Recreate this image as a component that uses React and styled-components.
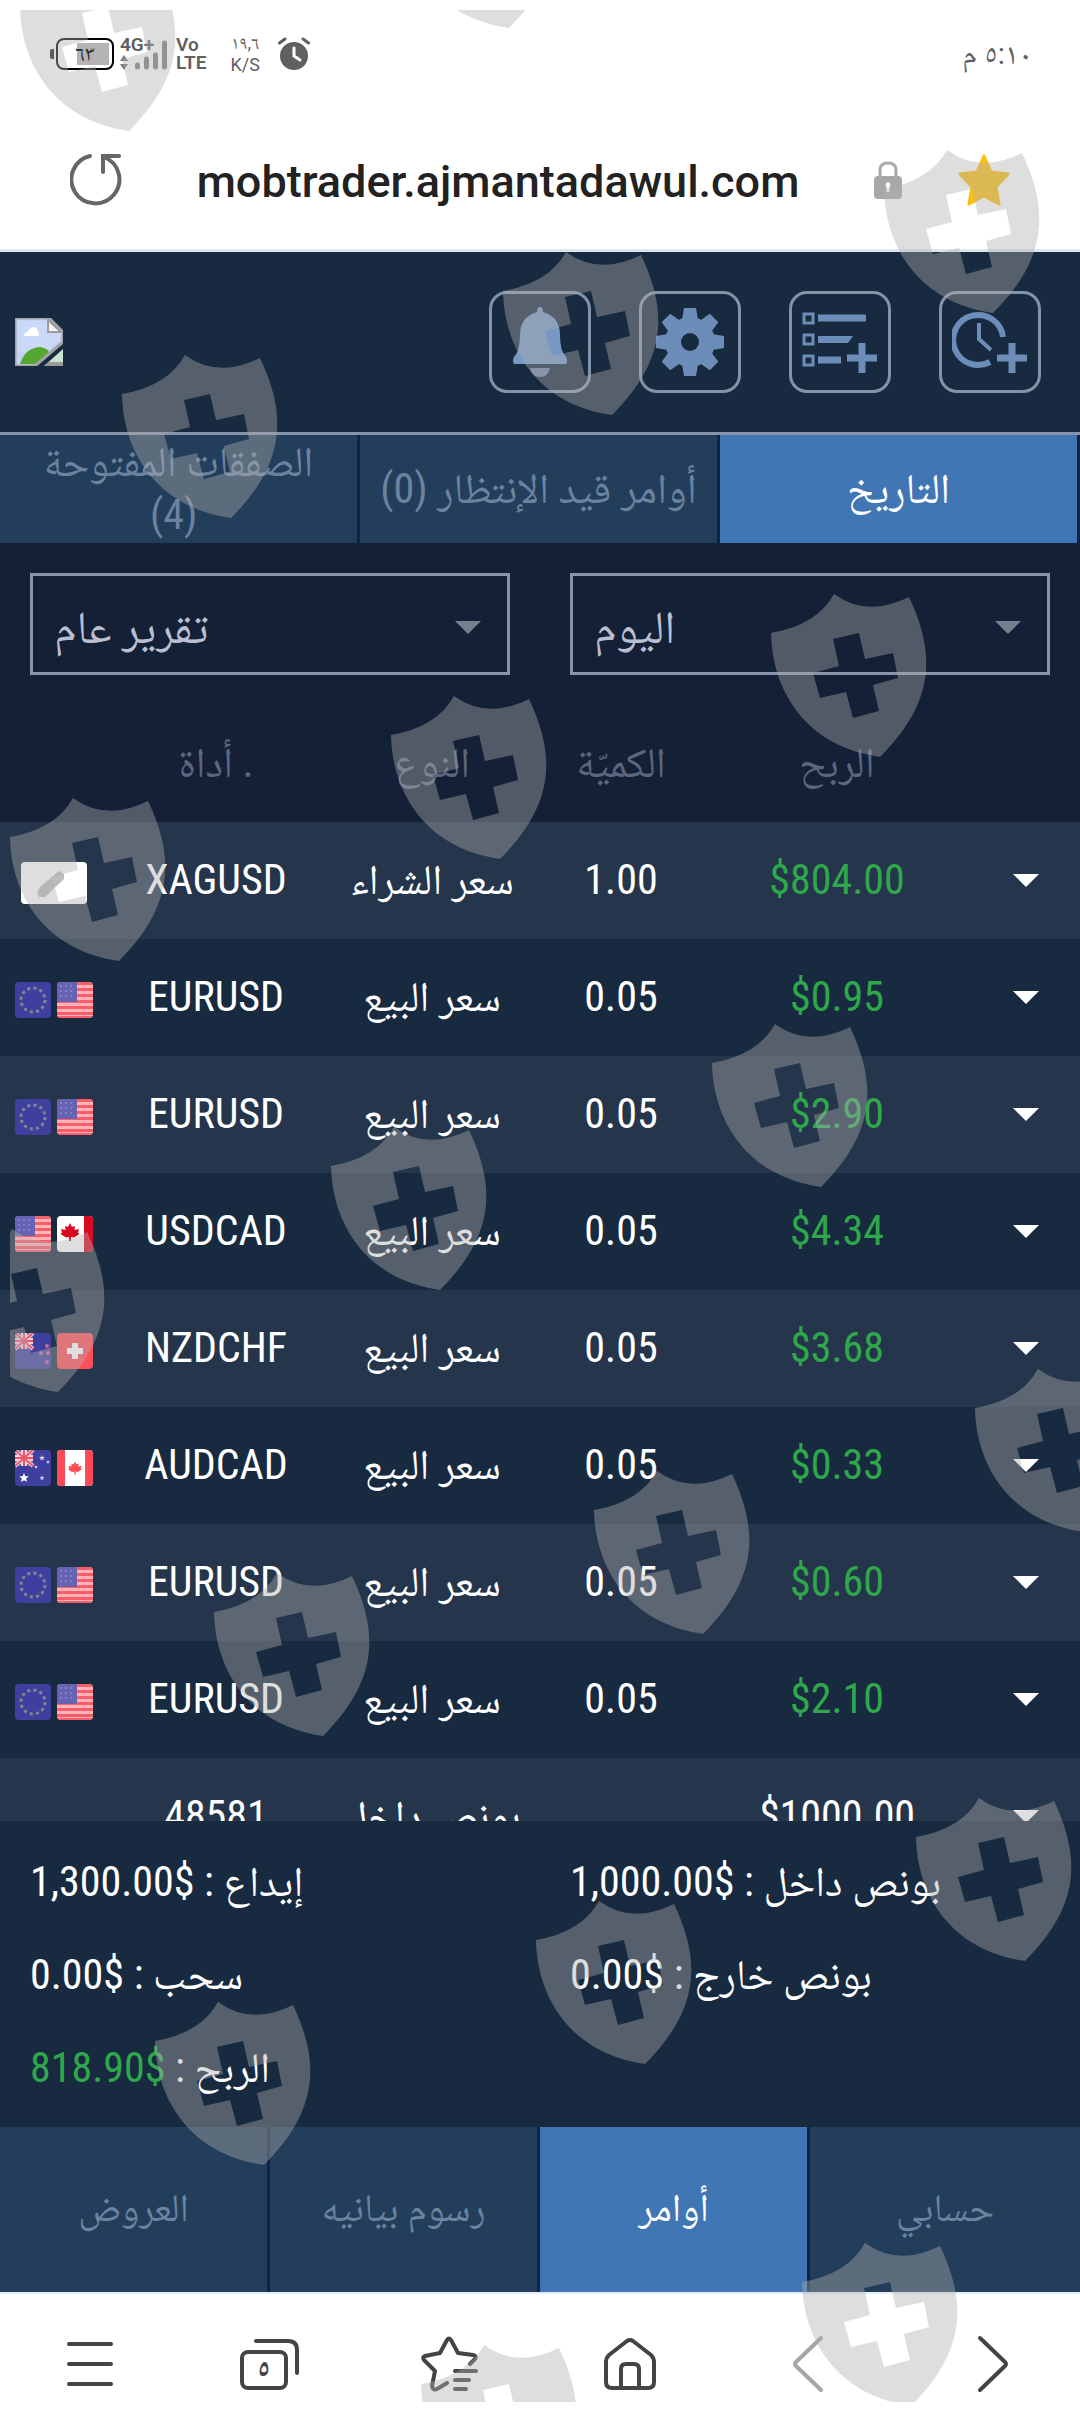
import React from "react";
import styled, { createGlobalStyle } from "styled-components";

const color = {
  navy: "#182a40",
  deep: "#142036",
  stripe: "#25364c",
  tab: "#233e5b",
  active: "#4176b5",
  line: "#8793a9",
  muted: "#6c83a0",
  head: "#5d667c",
  green: "#2fa84b",
  glyph: "#6b8db8",
};

const condensed = `"Roboto Condensed", "Liberation Sans Narrow", Roboto, "Noto Naskh Arabic", "Noto Sans Arabic", "DejaVu Sans", sans-serif`;
const regular = `Roboto, "Noto Naskh Arabic", "Noto Sans Arabic", "DejaVu Sans", sans-serif`;

const GlobalStyle = createGlobalStyle`
  *, *::before, *::after { box-sizing: border-box; }
  body { margin: 0; background: #fff; }
  button, select { font: inherit; color: inherit; border: 0; padding: 0; margin: 0; background: none; border-radius: 0; }
`;

const Page = styled.div`
  position: relative;
  display: flex;
  flex-direction: column;
  height: 100vh;
  overflow: hidden;
  background: #fff;
  font-family: ${condensed};
  font-size: 42px;
  line-height: 53px;
  color: #fff;
`;

/* ---------- phone status bar ---------- */
const StatusBar = styled.div`
  display: flex;
  align-items: center;
  height: 108px;
  padding: 0 48px 0 50px;
  font-family: ${regular};
  color: #606060;
`;
const Battery = styled.div`
  display: flex;
  align-items: center;
  gap: 2px;
  &::before { content: ""; width: 4px; height: 10px; background: #222; border-radius: 2px 0 0 2px; }
`;
const BatteryBody = styled.span`
  display: grid;
  place-items: center;
  width: 58px;
  height: 32px;
  border: 2px solid #000;
  border-radius: 8px;
  background: linear-gradient(#b4b4b4, #b4b4b4) right 3px center / 32px 22px no-repeat;
  font-size: 22px;
  line-height: 24px;
  color: #333;
`;
const Network = styled.div`
  display: grid;
  margin-left: 6px;
  width: 50px;
  height: 36px;
  & > * { grid-area: 1 / 1; }
`;
const Small = styled.span`
  font-size: 19px;
  line-height: 18px;
  font-weight: 600;
`;
const Stack = styled.div`
  display: flex;
  flex-direction: column;
  align-items: ${(p) => p.$align || "flex-start"};
  margin-left: ${(p) => p.$gap}px;
`;
const Speed = styled.span`
  font-size: 18px;
  line-height: 22px;
`;
const AlarmIcon = styled.svg`
  margin-left: 18px;
`;
const Clock = styled.time`
  margin-left: auto;
  font-size: 30px;
  line-height: 36px;
`;

/* ---------- browser address bar ---------- */
const AddressBar = styled.div`
  display: flex;
  align-items: center;
  height: 144px;
  padding: 2px 70px 0;
  border-bottom: 3px solid #dfe5ec;
`;
const IconButton = styled.button`
  display: grid;
  place-items: center;
  cursor: pointer;
`;
const Address = styled.div`
  flex: 1;
  padding-top: 4px;
  text-align: center;
  font-family: ${regular};
  font-size: 45px;
  line-height: 56px;
  font-weight: 500;
  color: #222;
`;
const AddressTools = styled.div`
  display: flex;
  align-items: center;
  gap: 56px;
`;

/* ---------- trader header ---------- */
const Header = styled.header`
  display: flex;
  align-items: center;
  justify-content: space-between;
  height: 183px;
  padding: 0 39px 0 15px;
  background: ${color.navy};
  border-bottom: 3px solid ${color.line};
`;
const Tools = styled.div`
  display: flex;
  gap: 48px;
`;
const ToolButton = styled.button`
  display: grid;
  place-items: center;
  width: 102px;
  height: 102px;
  border: 3px solid #8393a8;
  border-radius: 18px;
  cursor: pointer;
`;

/* ---------- tabs ---------- */
const TabRow = styled.nav`
  display: grid;
  grid-template-columns: repeat(${(p) => p.$count}, 1fr);
  height: ${(p) => p.$height}px;
  flex: none;
  background: ${color.tab};
  font-size: ${(p) => p.$size}px;
`;
const Tab = styled.button`
  padding: 0 12px 2px;
  border-right: 3px solid #132347;
  background: ${(p) => (p.$active ? color.active : color.tab)};
  color: ${(p) => (p.$active ? "#fff" : color.muted)};
  overflow: hidden;
  cursor: pointer;
  ${(p) => p.$last && "border-right: 0;"}
`;
const TabText = styled.span`
  display: block;
`;

/* ---------- filters ---------- */
const Filters = styled.div`
  display: grid;
  grid-template-columns: 1fr 1fr;
  gap: 60px;
  padding: 30px;
  background: ${color.deep};
`;
const SelectBox = styled.label`
  display: grid;
  align-items: center;
  height: 102px;
  border: 3px solid ${color.line};
  color: #b9bfd0;
  & > * { grid-area: 1 / 1; }
  & > svg { justify-self: end; margin: 6px 24px 0 0; pointer-events: none; }
`;
const Select = styled.select`
  appearance: none;
  width: 100%;
  height: 100%;
  padding: 6px 21px 0;
  font-size: 46px;
  line-height: 60px;
`;

/* ---------- orders table ---------- */
const TableArea = styled.main`
  flex: 1;
  min-height: 0;
  overflow: auto;
  scrollbar-width: none;
  background: ${color.navy};
`;
const Table = styled.table`
  width: 100%;
  table-layout: fixed;
  border-collapse: collapse;
`;
const Col = styled.col`
  width: ${(p) => p.$w}%;
`;
const HeadRow = styled.tr`
  height: 117px;
  background: ${color.deep};
  color: ${color.head};
`;
const Row = styled.tr`
  height: 117px;
  &:nth-child(odd) { background: ${color.stripe}; }
`;
const Th = styled.th`
  padding: 0 0 2px;
  font-weight: 400;
  white-space: nowrap;
`;
const Td = styled.td`
  padding: 0 0 2px;
  text-align: center;
  white-space: nowrap;
  color: ${(p) => (p.$gain ? color.green : "#fff")};
`;
const Flags = styled.span`
  display: flex;
  justify-content: center;
  gap: 6px;
  padding-top: 6px;
`;
const RowToggle = styled(IconButton)`
  width: 100%;
  padding-top: 2px;
`;

/* ---------- summary ---------- */
const Summary = styled.section`
  display: grid;
  grid-template-columns: 1fr 1fr;
  grid-auto-rows: 93px;
  align-items: center;
  column-gap: 60px;
  padding: 14px 30px 13px;
  background: ${color.navy};
`;
const Total = styled.div`
  grid-column: ${(p) => p.$col};
  text-align: left;
  white-space: nowrap;
`;
const Value = styled.bdi`
  color: ${(p) => (p.$gain ? color.green : "#fff")};
`;

/* ---------- browser toolbar ---------- */
const Toolbar = styled.nav`
  display: grid;
  grid-template-columns: repeat(6, 1fr);
  flex: none;
  height: 144px;
  padding-bottom: 2px;
  border-top: 2px solid #e3edf8;
  color: #444;
`;
const TabCount = styled.span`
  grid-area: 1 / 1;
  padding: 8px 12px 0 0;
  font-family: ${regular};
  font-size: 28px;
  line-height: 28px;
  font-weight: 700;
`;
const Stacked = styled(IconButton)`
  & > svg { grid-area: 1 / 1; }
`;

const Overlay = styled.div`
  position: absolute;
  inset: 10px 0 34px 10px;
  overflow: hidden;
  pointer-events: none;
  & > svg { display: block; }
`;

/* ---------- icons ---------- */
const Caret = ({ fill = "#fff", w = 26, h = 13 }) => (
  <svg width={w} height={h} viewBox="0 0 26 13" aria-hidden="true"><path d="M0 0H26L13 13Z" fill={fill} /></svg>
);

const Star5 = ({ cx, cy, r, fill }) => {
  const pts = [];
  for (let i = 0; i < 10; i++) {
    const a = (Math.PI / 5) * i - Math.PI / 2;
    const q = i % 2 ? r * 0.45 : r;
    pts.push(`${(cx + q * Math.cos(a)).toFixed(2)},${(cy + q * Math.sin(a)).toFixed(2)}`);
  }
  return <polygon points={pts.join(" ")} fill={fill} />;
};

const Leaf = ({ x, fill }) => (
  <path transform={`translate(${x} 9)`} fill={fill}
    d="M0 0L2 4L5 3L4.500 7L9 6L8 9.500L9.500 11L4 14.500L1 14V18H-1V14L-4 14.500L-9.500 11L-8 9.500L-9 6L-4.500 7L-5 3L-2 4Z" />
);

const UnionJack = () => (
  <g>
    <rect width="18" height="16" fill="#5a58b0" />
    <path d="M0 0L18 16M18 0L0 16" stroke="#f3d5dc" strokeWidth="4" />
    <path d="M9 0V16M0 8H18" stroke="#f3d5dc" strokeWidth="6" />
    <path d="M9 0V16M0 8H18M0 0L18 16M18 0L0 16" stroke="#f0566a" strokeWidth="2" />
  </g>
);

const flagArt = {
  EU: (
    <>
      <rect width="36" height="36" fill="#3f3f9f" />
      <circle cx="18" cy="18" r="12" fill="none" stroke="#85838c" strokeWidth="3" strokeDasharray="3.200 3.080" />
    </>
  ),
  US: (
    <>
      <rect width="36" height="36" fill="#ffb3b8" />
      {[1, 7, 13, 19, 25, 31].map((y) => <rect key={y} y={y - 1} width="36" height="3" fill="#fb5d6b" />)}
      <rect y="34" width="36" height="2" fill="#fb5d6b" />
      <rect width="20" height="20" fill="#6663b4" />
      {[4, 9, 14].map((y) => <path key={y} d={`M3 ${y}H18`} stroke="#8480c6" strokeWidth="2" strokeDasharray="2 3" />)}
    </>
  ),
  CA: (
    <>
      <rect width="36" height="36" fill="#fff" />
      <rect width="8" height="36" fill="#ff4b57" />
      <rect x="28" width="8" height="36" fill="#ff4b57" />
      <g transform="translate(5 5) scale(0.72)"><Leaf x={18} fill="#ff4b57" /></g>
    </>
  ),
  CA_WIDE: (
    <>
      <rect width="36" height="36" fill="#fff" />
      <rect x="27" width="9" height="36" fill="#d80a20" />
      <g transform="translate(0 -2)"><Leaf x={13} fill="#d80a20" /></g>
    </>
  ),
  NZ: (
    <>
      <rect width="36" height="36" fill="#3f3f9f" />
      <UnionJack />
      <circle cx="32" cy="13" r="2" fill="#c66a96" />
      <circle cx="26" cy="20" r="2" fill="#c66a96" />
      <circle cx="33" cy="20" r="2" fill="#c66a96" />
      <circle cx="32" cy="29" r="2" fill="#c66a96" />
    </>
  ),
  AU: (
    <>
      <rect width="36" height="36" fill="#3f3f9f" />
      <UnionJack />
      <Star5 cx={9} cy={28} r={5} fill="#fff" />
      <Star5 cx={27} cy={8} r={3} fill="#d5d4ee" />
      <Star5 cx={33} cy={12} r={2} fill="#d5d4ee" />
      <Star5 cx={21} cy={17} r={2} fill="#d5d4ee" />
      <Star5 cx={27} cy={28} r={2.5} fill="#d5d4ee" />
    </>
  ),
  CH: (
    <>
      <rect width="36" height="36" fill="#ff4f59" />
      <path d="M18 10V26M10 18H26" stroke="#fff" strokeWidth="6" />
    </>
  ),
};

const FlagSvg = styled.svg`
  display: block;
  border-radius: 4px;
`;
const Flag = ({ code }) => <FlagSvg width="36" height="36" viewBox="0 0 36 36" aria-label={code}>{flagArt[code]}</FlagSvg>;

const Silver = () => (
  <FlagSvg width="66" height="42" viewBox="0 0 66 42" aria-label="XAG">
    <rect width="66" height="42" fill="#fff" />
    <path d="M16 31L19 25L38 9L43 12V17L24 35H18Z" fill="#bcbcbc" />
  </FlagSvg>
);

const BrokenImage = () => (
  <svg width="48" height="48" viewBox="0 0 48 48" role="img" aria-label="logo">
    <path d="M0 0H34L48 14V24L20 48H0Z" fill="#c3d3f7" />
    <path d="M34 0L48 14V24L20 48H0V0H34" fill="none" stroke="#a3a3a3" strokeWidth="3" />
    <path d="M3 3H32V14H45V22L30 34H3Z" fill="#cbd9f8" />
    <path d="M9 18Q9 14 13 14Q14 9 19 9Q24 10 24 18Z" fill="#fff" />
    <path d="M5 46Q10 30 25 29Q32 30 34 34L20 46Z" fill="#54a82f" />
    <path d="M33 2L46 14H33Z" fill="#f4f4f4" stroke="#9c9c9c" strokeWidth="2" />
    <path d="M48 31V48H29Z" fill="#c9e3cf" />
    <path d="M29 48H48V44H34Z" fill="#9a9a9a" />
  </svg>
);

const BellIcon = () => (
  <svg width="60" height="70" viewBox="0 0 60 70" aria-hidden="true">
    <path d="M30 0Q33 0 33 5Q50 10 50 28Q50 44 56 50Q58 54 56 57H4Q2 54 4 50Q10 44 10 28Q10 10 27 5Q27 0 30 0Z" fill="#7698c3" />
    <path d="M20 61H40Q38 70 30 70Q22 70 20 61Z" fill="#6f83a4" />
  </svg>
);

const GearIcon = () => (
  <svg width="68" height="68" viewBox="0 0 68 68" aria-hidden="true">
    <g fill={color.glyph}>
      {[0, 45, 90, 135].map((a) => <path key={a} d="M28 0H40L42 12V56L40 68H28L26 56V12Z" transform={`rotate(${a} 34 34)`} />)}
      <circle cx="34" cy="34" r="25" />
    </g>
    <circle cx="34" cy="34" r="9" fill={color.navy} />
  </svg>
);

const ListPlusIcon = () => (
  <svg width="76" height="64" viewBox="0 0 76 64" aria-hidden="true" fill="none" stroke={color.glyph}>
    <path d="M2 4H11V13H2ZM2 25H11V34H2ZM2 46H11V55H2Z" strokeWidth="3" />
    <path d="M16 8H64" strokeWidth="7" />
    <path d="M16 26H51L46 33H16Z" fill={color.glyph} stroke="none" />
    <path d="M16 50H39" strokeWidth="7" />
    <path d="M60 33V63M45 48H75" strokeWidth="7" />
  </svg>
);

const ClockPlusIcon = () => (
  <svg width="76" height="64" viewBox="0 0 76 64" aria-hidden="true" fill="none" stroke={color.glyph}>
    <path d="M51 27A25 25 0 1 0 38 52" strokeWidth="6" />
    <path d="M27 13V29L39 40" strokeWidth="4" />
    <path d="M60 33V63M45 48H75" strokeWidth="7" />
  </svg>
);

const shields = [
  [20, -32], [400, -135], [884, 150], [503, 252], [122, 355], [771, 594], [391, 696], [10, 798],
  [712, 1024], [331, 1127], [-51, 1229], [975, 1369], [594, 1471], [214, 1573], [916, 1798],
  [536, 1901], [155, 2002], [802, 2243], [421, 2345],
];
const Shields = () => (
  <Overlay aria-hidden="true">
    <svg width="1070" height="2392" viewBox="10 10 1070 2392">
      <defs>
        <path id="shield" fillRule="evenodd"
          d="M0 39Q46 31 63 0Q96 24 138 3C165 60 164 108 109 163C33 152 1 95 0 39ZM62 45L68 72L42 79L49 104L75 98L82 124L108 117L102 91L127 84L122 59L94 65L88 39Z" />
      </defs>
      <g fill="#b0b0b0" fillOpacity="0.41">
        {shields.map(([x, y]) => <use key={`${x}-${y}`} href="#shield" x={x} y={y} />)}
      </g>
    </svg>
  </Overlay>
);

/* ---------- data ---------- */
const sell = "سعر البيع";
const orders = [
  { art: "XAG", name: "XAGUSD", kind: "سعر الشراء", size: "1.00", profit: "$804.00", gain: true },
  { flags: ["EU", "US"], name: "EURUSD", kind: sell, size: "0.05", profit: "$0.95", gain: true },
  { flags: ["EU", "US"], name: "EURUSD", kind: sell, size: "0.05", profit: "$2.90", gain: true },
  { flags: ["US", "CA_WIDE"], name: "USDCAD", kind: sell, size: "0.05", profit: "$4.34", gain: true },
  { flags: ["NZ", "CH"], name: "NZDCHF", kind: sell, size: "0.05", profit: "$3.68", gain: true },
  { flags: ["AU", "CA"], name: "AUDCAD", kind: sell, size: "0.05", profit: "$0.33", gain: true },
  { flags: ["EU", "US"], name: "EURUSD", kind: sell, size: "0.05", profit: "$0.60", gain: true },
  { flags: ["EU", "US"], name: "EURUSD", kind: sell, size: "0.05", profit: "$2.10", gain: true },
  { name: "48581", kind: "بونص داخل", size: "", profit: "$1000.00" },
];
const totals = [
  { label: "إيداع", value: "1,300.00$", col: 1 },
  { label: "بونص داخل", value: "1,000.00$", col: 2 },
  { label: "سحب", value: "0.00$", col: 1 },
  { label: "بونص خارج", value: "0.00$", col: 2 },
  { label: "الربح", value: "818.90$", col: 1, gain: true },
];

export default function App() {
  return (
    <Page>
      <GlobalStyle />
      <StatusBar>
        <Battery><BatteryBody>٦٣</BatteryBody></Battery>
        <Network>
          <Small>4G+</Small>
          <svg width="50" height="34" viewBox="0 0 50 34" aria-hidden="true">
            <path d="M0 25L4 19L8 25ZM0 28H8L4 34Z" fill="#777" />
            <path d="M17.500 29V31M26.500 23V31M35.500 19V31M44.500 7V31" stroke="#808080" strokeWidth="5" strokeLinecap="round" />
          </svg>
        </Network>
        <Stack $gap={6}><Small>Vo</Small><Small>LTE</Small></Stack>
        <Stack $gap={24} $align="center"><Speed>١٩,٦</Speed><Speed>K/S</Speed></Stack>
        <AlarmIcon width="32" height="34" viewBox="0 0 32 34" aria-hidden="true">
          <circle cx="16" cy="19" r="14" fill="#606060" />
          <path d="M16 11V19L22 23" stroke="#fff" strokeWidth="3" fill="none" strokeLinecap="round" />
          <path d="M1.500 6L7 2M30.500 6L25 2" stroke="#606060" strokeWidth="3" strokeLinecap="round" />
        </AlarmIcon>
        <Clock dir="rtl">٥:١٠ م</Clock>
      </StatusBar>

      <AddressBar>
        <IconButton aria-label="Reload">
          <svg width="52" height="54" viewBox="0 0 52 54" fill="none" stroke="#666" strokeWidth="4" strokeLinecap="round" aria-hidden="true">
            <path d="M20 3A24 24 0 1 0 34 4" />
            <path d="M49 3H33V19" />
          </svg>
        </IconButton>
        <Address>mobtrader.ajmantadawul.com</Address>
        <AddressTools>
          <svg width="28" height="38" viewBox="0 0 28 38" role="img" aria-label="Secure">
            <path d="M6 17V9Q6 2 14 2Q22 2 22 9V17" fill="none" stroke="#a8a8a8" strokeWidth="3" />
            <rect y="15" width="28" height="23" rx="4" fill="#a8a8a8" />
            <path d="M14 21A3 3 0 0 1 15.500 26V31H12.500V26A3 3 0 0 1 14 21Z" fill="#fff" />
          </svg>
          <IconButton aria-label="Bookmark">
            <svg width="52" height="52" viewBox="0 0 52 52" aria-hidden="true">
              <path d="M26 2L33 18L50 20L38 33L41 50L26 42L11 50L14 33L2 20L19 18Z" fill="#fbbf12" stroke="#fbbf12" strokeWidth="3" strokeLinejoin="round" />
            </svg>
          </IconButton>
        </AddressTools>
      </AddressBar>

      <Header>
        <BrokenImage />
        <Tools>
          <ToolButton aria-label="Alerts"><BellIcon /></ToolButton>
          <ToolButton aria-label="Settings"><GearIcon /></ToolButton>
          <ToolButton aria-label="New order"><ListPlusIcon /></ToolButton>
          <ToolButton aria-label="New pending order"><ClockPlusIcon /></ToolButton>
        </Tools>
      </Header>

      <TabRow $count={3} $height={108} $size={42}>
        <Tab dir="rtl"><TabText>الصفقات المفتوحة</TabText><TabText>{"\u00a0(4)"}</TabText></Tab>
        <Tab dir="rtl"><TabText>أوامر قيد الإنتظار (0)</TabText></Tab>
        <Tab dir="rtl" $active><TabText>التاريخ</TabText></Tab>
      </TabRow>

      <Filters>
        <SelectBox>
          <Select aria-label="نوع التقرير" defaultValue="general"><option value="general">تقرير عام</option></Select>
          <Caret fill="#76808f" w={30} h={13} />
        </SelectBox>
        <SelectBox>
          <Select aria-label="الفترة" defaultValue="today"><option value="today">اليوم</option></Select>
          <Caret fill="#76808f" w={30} h={13} />
        </SelectBox>
      </Filters>

      <TableArea>
        <Table>
          <colgroup>{[10, 20, 20, 15, 25, 10].map((w, i) => <Col key={i} $w={w} />)}</colgroup>
          <thead>
            <HeadRow>
              <Th />
              <Th>أداة .</Th>
              <Th>النوع</Th>
              <Th>الكميّة</Th>
              <Th>الربح</Th>
              <Th />
            </HeadRow>
          </thead>
          <tbody>
            {orders.map((o, i) => (
              <Row key={i}>
                <Td><Flags>{o.art ? <Silver /> : (o.flags || []).map((f) => <Flag key={f} code={f} />)}</Flags></Td>
                <Td>{o.name}</Td>
                <Td dir="rtl">{o.kind}</Td>
                <Td>{o.size}</Td>
                <Td $gain={o.gain}>{o.profit}</Td>
                <Td><RowToggle aria-label="Details"><Caret /></RowToggle></Td>
              </Row>
            ))}
          </tbody>
        </Table>
      </TableArea>

      <Summary>
        {totals.map((t) => (
          <Total key={t.label} dir="rtl" $col={t.col}>{t.label} : <Value dir="ltr" $gain={t.gain}>{t.value}</Value></Total>
        ))}
      </Summary>

      <TabRow $count={4} $height={165} $size={39}>
        <Tab>العروض</Tab>
        <Tab>رسوم بيانيه</Tab>
        <Tab $active>أوامر</Tab>
        <Tab $last>حسابي</Tab>
      </TabRow>

      <Toolbar>
        <IconButton aria-label="Menu">
          <svg width="46" height="46" viewBox="0 0 46 46" stroke="#444" strokeWidth="4" strokeLinecap="round" aria-hidden="true">
            <path d="M2 3H44M2 23H44M2 43H44" />
          </svg>
        </IconButton>
        <Stacked aria-label="Tabs">
          <svg width="60" height="52" viewBox="0 0 60 52" fill="none" stroke="#444" strokeWidth="4" strokeLinecap="round" aria-hidden="true">
            <rect x="2" y="14" width="44" height="36" rx="6" />
            <path d="M16 3H48Q57 3 57 12V35" />
          </svg>
          <TabCount>٥</TabCount>
        </Stacked>
        <IconButton aria-label="Bookmarks">
          <svg width="58" height="56" viewBox="0 0 58 56" fill="none" stroke="#444" strokeWidth="4" strokeLinecap="round" strokeLinejoin="round" aria-hidden="true">
            <path d="M49 28L54 23Q56 20 52 19L37 17L30 4Q28 1 26 4L19 17L4 20Q1 21 3 24L14 35L11 50Q12 55 16 53L26 47" />
            <path d="M34 35H55M34 44H48M34 53H45" />
          </svg>
        </IconButton>
        <IconButton aria-label="Home">
          <svg width="52" height="54" viewBox="0 0 52 54" fill="none" stroke="#444" strokeWidth="4" strokeLinejoin="round" aria-hidden="true">
            <path d="M2 24Q2 21 5 18L23 4Q26 2 29 4L47 18Q50 21 50 24V45Q50 51 44 51H8Q2 51 2 45Z" />
            <path d="M17 51V32Q17 27 22 27H30Q35 27 35 32V51" />
          </svg>
        </IconButton>
        <IconButton aria-label="Back">
          <svg width="36" height="58" viewBox="0 0 36 58" fill="none" stroke="#a6a6a6" strokeWidth="4" strokeLinecap="round" strokeLinejoin="round" aria-hidden="true">
            <path d="M29 3L4 27Q2 29 4 31L29 55" />
          </svg>
        </IconButton>
        <IconButton aria-label="Forward">
          <svg width="36" height="58" viewBox="0 0 36 58" fill="none" stroke="#444" strokeWidth="4" strokeLinecap="round" strokeLinejoin="round" aria-hidden="true">
            <path d="M8 3L33 27Q35 29 33 31L8 55" />
          </svg>
        </IconButton>
      </Toolbar>
      <Shields />
    </Page>
  );
}
